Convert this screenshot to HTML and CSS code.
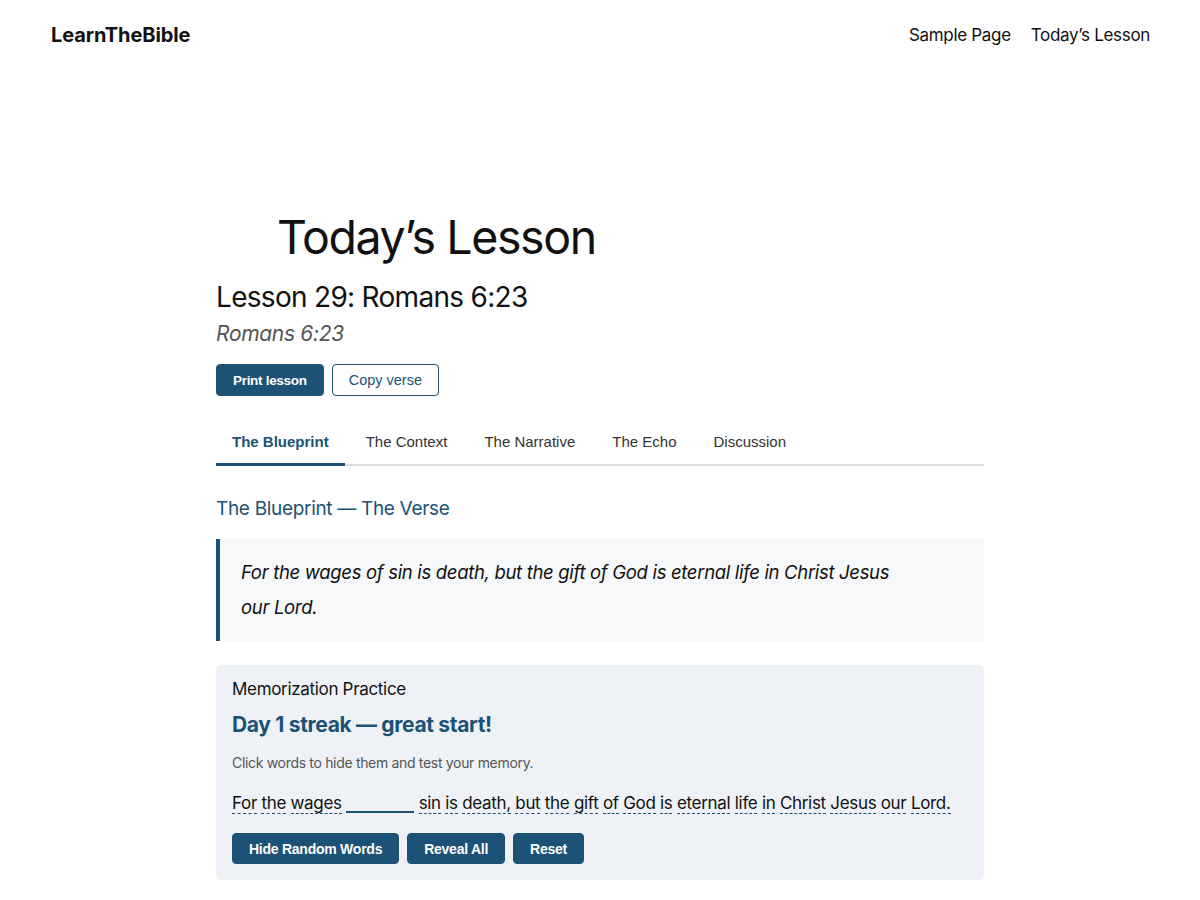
FILE: index.html
```html
<!DOCTYPE html>
<html lang="en">
<head>
<meta charset="utf-8">
<title>Today's Lesson – LearnTheBible</title>
<link rel="stylesheet" href="styles.css">
</head>
<body>
<header class="site-header">
  <a class="logo" href="#">LearnTheBible</a>
  <nav class="site-nav">
    <a href="#">Sample Page</a>
    <a href="#">Today’s Lesson</a>
  </nav>
</header>
<main class="content">
  <h1 class="page-title">Today’s Lesson</h1>
  <h2 class="lesson-title">Lesson 29: Romans 6:23</h2>
  <p class="lesson-ref">Romans 6:23</p>
  <div class="actions">
    <button class="btn btn-solid">Print lesson</button>
    <button class="btn btn-outline">Copy verse</button>
  </div>
  <div class="tabs">
    <button class="tab active">The Blueprint</button>
    <button class="tab">The Context</button>
    <button class="tab">The Narrative</button>
    <button class="tab">The Echo</button>
    <button class="tab">Discussion</button>
  </div>
  <h3 class="section-title">The Blueprint — The Verse</h3>
  <blockquote class="verse">
    <p>For the wages of sin is death, but the gift of God is eternal life in Christ Jesus our Lord.</p>
  </blockquote>
  <section class="memo">
    <h4 class="memo-title">Memorization Practice</h4>
    <p class="streak">Day 1 streak — great start!</p>
    <p class="hint">Click words to hide them and test your memory.</p>
    <p class="memo-verse"><span class="w">For</span> <span class="w">the</span> <span class="w">wages</span> <span class="w hidden"></span> <span class="w">sin</span> <span class="w">is</span> <span class="w">death,</span> <span class="w">but</span> <span class="w">the</span> <span class="w">gift</span> <span class="w">of</span> <span class="w">God</span> <span class="w">is</span> <span class="w">eternal</span> <span class="w">life</span> <span class="w">in</span> <span class="w">Christ</span> <span class="w">Jesus</span> <span class="w">our</span> <span class="w">Lord.</span></p>
    <div class="memo-actions">
      <button class="btn btn-solid btn-bold">Hide Random Words</button>
      <button class="btn btn-solid btn-bold">Reveal All</button>
      <button class="btn btn-solid btn-bold">Reset</button>
    </div>
  </section>
</main>
</body>
</html>
```
FILE: styles.css
```css
* { box-sizing: border-box; }
body {
  margin: 0;
  background: #fff;
  color: #111;
  font-family: Inter, "Noto Sans", sans-serif;
  letter-spacing: -0.02em;
}
a { color: inherit; text-decoration: none; }

.site-header {
  height: 70px;
  padding: 0 50px 0 51px;
  display: flex;
  align-items: center;
  justify-content: space-between;
}
.logo {
  font-size: 20px;
  font-weight: 700;
  letter-spacing: -0.005em;
}
.site-nav {
  display: flex;
  gap: 20px;
  font-size: 17px;
  font-weight: 400;
}

.content {
  width: 768px;
  margin: 0 auto;
  padding: 137px 0 40px;
}
.page-title {
  margin: 0 0 0 61px;
  font-size: 46.5px;
  line-height: 60px;
  font-weight: 400;
  letter-spacing: -0.03em;
}
.lesson-title {
  margin: 12px 0 0;
  font-size: 28px;
  line-height: 36px;
  font-weight: 400;
  letter-spacing: -0.025em;
}
.lesson-ref {
  margin: 4px 0 0;
  font-size: 21px;
  line-height: 30px;
  font-style: italic;
  color: #555;
}

.actions {
  display: flex;
  gap: 8px;
  margin-top: 15px;
}
.btn {
  font-family: "Liberation Sans", Arial, sans-serif;
  font-size: 14px;
  letter-spacing: 0;
  height: 32px;
  padding: 0 16px;
  border-radius: 4px;
  border: 1px solid #1b5276;
  cursor: pointer;
}
.btn-solid {
  background: #1b5276;
  color: #fff;
}
.btn-outline {
  background: #fff;
  color: #1b5276;
  font-size: 14.5px;
}
.actions .btn-solid {
  font-size: 13.5px;
  font-weight: 700;
  letter-spacing: -0.3px;
}

.tabs {
  display: flex;
  gap: 5px;
  margin-top: 24px;
  border-bottom: 2px solid #ddd;
}
.tab {
  font-family: "Liberation Sans", Arial, sans-serif;
  font-size: 15px;
  letter-spacing: 0;
  line-height: 20px;
  padding: 12px 16px 11px;
  margin-bottom: -2px;
  background: none;
  border: 0;
  border-bottom: 3px solid transparent;
  color: #333;
  cursor: pointer;
}
.tab.active {
  color: #1b5276;
  font-weight: 700;
  border-bottom-color: #1b5276;
}

.section-title {
  margin: 29px 0 0;
  font-size: 19px;
  line-height: 28px;
  font-weight: 400;
  color: #1b5276;
}
.verse {
  margin: 16px 0 0;
  padding: 16px 90px 16px 21px;
  background: #f6f8fa;
  border-left: 4px solid #1b5276;
}
.verse p {
  margin: 0;
  font-size: 18.5px;
  line-height: 35px;
  font-style: italic;
  color: #111;
}

.memo {
  margin-top: 24px;
  padding: 12px 16px 16px;
  background: #eef2f7;
  border-radius: 6px;
}
.memo-title {
  margin: 0;
  font-size: 17px;
  line-height: 25px;
  font-weight: 400;
}
.streak {
  margin: 8px 0 0;
  font-size: 21px;
  line-height: 30px;
  font-weight: 700;
  color: #1b5276;
}
.hint {
  margin: 13px 0 0;
  font-size: 14px;
  line-height: 20px;
  color: #555;
}
.memo-verse {
  margin: 16px 0 0;
  font-size: 17px;
  line-height: 28px;
}
.w {
  border-bottom: 1px dashed #1b5276;
  cursor: pointer;
}
.w.hidden {
  display: inline-block;
  width: 68px;
  height: 20px;
  vertical-align: -4px;
  border-bottom: 2px solid #1b5276;
}
.memo-actions {
  display: flex;
  gap: 8px;
  margin-top: 16px;
}
.btn-bold {
  height: 31px;
  font-weight: 700;
  letter-spacing: -0.25px;
}
```
